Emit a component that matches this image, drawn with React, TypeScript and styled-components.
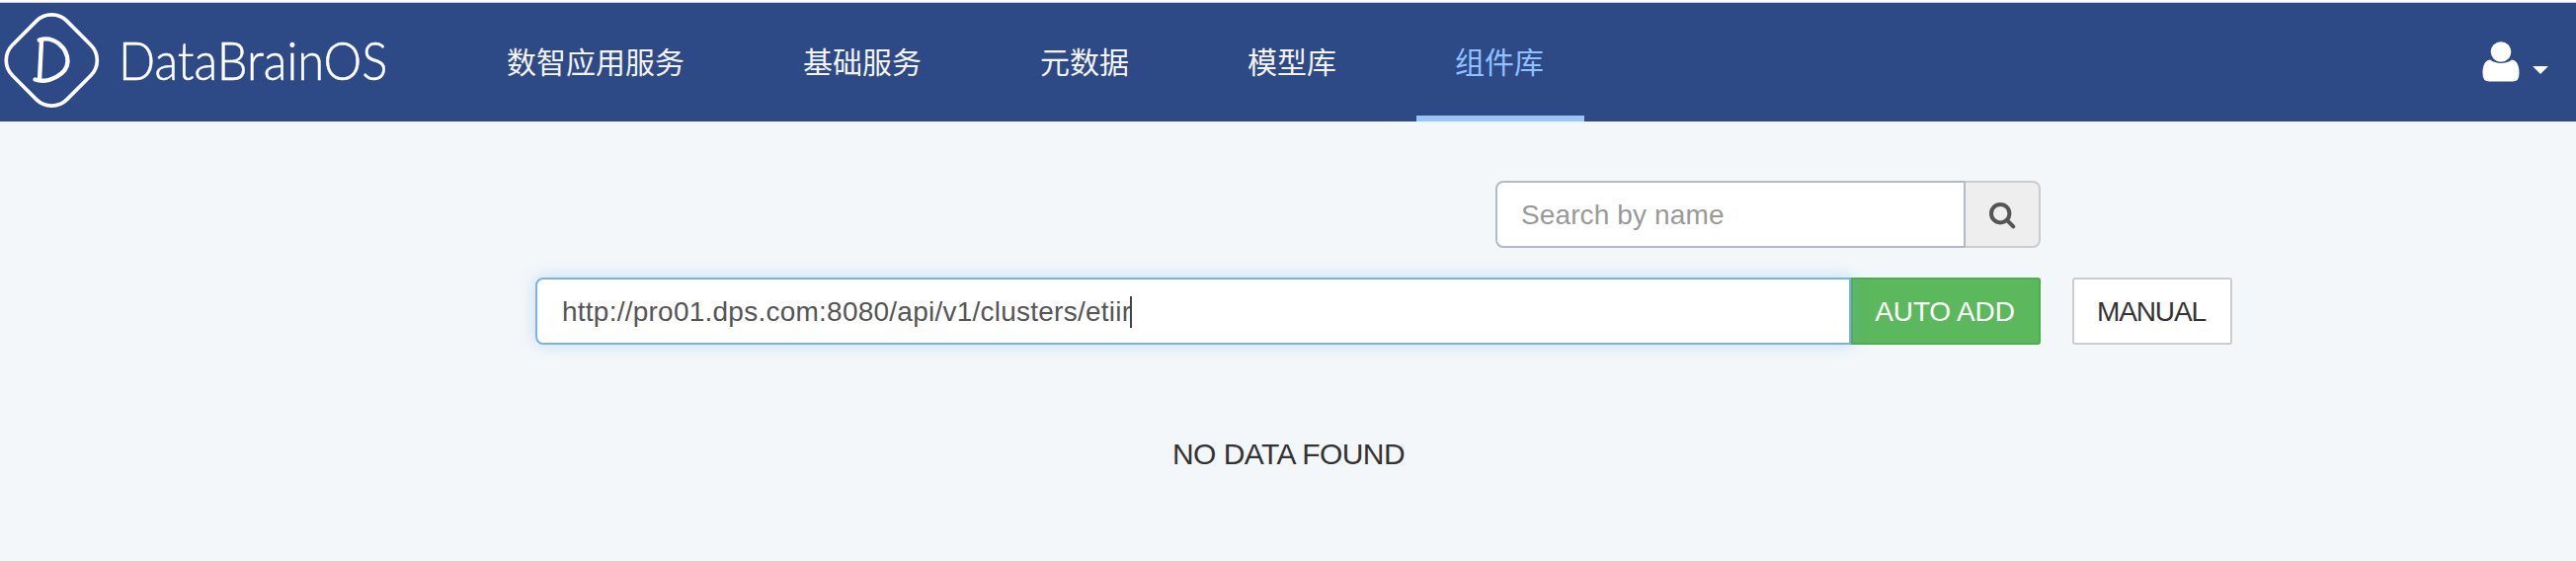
import React from "react";
import styled, { createGlobalStyle } from "styled-components";

const GlobalStyle = createGlobalStyle`
  * { box-sizing: border-box; }
  body {
    margin: 0;
    background: #f3f7fa;
    font-family: "Liberation Sans", "Noto Sans CJK SC", sans-serif;
    font-size: 28px;
    line-height: 40px;
    color: #333;
  }
`;

const Page = styled.div`
  width: 2608px;
  height: 568px;
  border-top: 2px solid #fff;
`;

const Header = styled.header`
  display: flex;
  height: 121px;
  border-top: 1px solid #c9cccf;
  background: #2d4a86;
`;

const Brand = styled.a`
  display: flex;
  width: 474px;
  height: 120px;
`;

const Wordmark = styled.span`
  width: 300px;
  margin-left: 8px;
  font: 300 54px/115px Lato, sans-serif;
  color: #fff;
  white-space: nowrap;
  -webkit-text-stroke: 0.5px #fff;
  transform: scaleX(0.905);
  transform-origin: 0 50%;
`;

const Nav = styled.nav`
  display: flex;
  gap: 40px;
`;

const NavItem = styled.a<{ $active?: boolean }>`
  height: 120px;
  padding: 0 41px 0 39px;
  box-shadow: inset 0 -6px ${(p) => (p.$active ? "#98c5ff" : "transparent")};
  color: ${(p) => (p.$active ? "#8fc0ff" : "#f3f3f3")};
  font-size: 30px;
  line-height: 121px;
  white-space: nowrap;
`;

const UserMenu = styled.div`
  margin-left: auto;
  padding: 39px 28px 0 0;
  display: flex;
  gap: 13px;
`;

const Caret = styled.span`
  margin-top: 25px;
  width: 0;
  height: 0;
  border: 8px solid transparent;
  border-top-color: #fff;
`;

const Main = styled.main`
  padding: 60px 348px 0 542px;
`;

const SearchRow = styled.div`
  display: flex;
  width: 552px;
  margin-left: 972px;
`;

const Field = styled.div<{ $focused?: boolean }>`
  flex: 1;
  display: flex;
  align-items: center;
  height: 68px;
  padding: 2px 24px 0 ${(p) => (p.$focused ? 25 : 24)}px;
  background: #fff;
  border: 2px solid ${(p) => (p.$focused ? "#78b3e4" : "#b2b9c8")};
  border-radius: 8px 0 0 8px;
  color: ${(p) => (p.$focused ? "#555" : "#999")};
  letter-spacing: ${(p) => (p.$focused ? 0.24 : 0.12)}px;
  ${(p) => p.$focused && "position: relative; box-shadow: 0 0 16px rgba(102, 175, 233, 0.35);"}
`;

const TextCursor = styled.span`
  width: 2px;
  height: 32px;
  margin-left: -1px;
  background: #444;
`;

const SearchAddon = styled.button`
  display: flex;
  align-items: center;
  justify-content: center;
  width: 76px;
  height: 68px;
  padding: 2px 0 0;
  border: 2px solid #ccc;
  border-left: 0;
  border-radius: 0 8px 8px 0;
  background: #eee;
`;

const AddRow = styled.div`
  display: flex;
  margin-top: 30px;
`;

const Button = styled.button<{ $primary?: boolean }>`
  height: 68px;
  width: ${(p) => (p.$primary ? 192 : 162)}px;
  margin-left: ${(p) => (p.$primary ? 0 : 32)}px;
  padding: 2px 2px 0 0;
  border: 2px solid ${(p) => (p.$primary ? "#4cae4c" : "#ccc")};
  border-radius: ${(p) => (p.$primary ? "0 3px 3px 0" : "3px")};
  background: ${(p) => (p.$primary ? "#5cb85c" : "#fff")};
  color: ${(p) => (p.$primary ? "#fff" : "#333")};
  font: 28px/40px "Liberation Sans", sans-serif;
  letter-spacing: ${(p) => (p.$primary ? -0.15 : -1.1)}px;
`;

const Empty = styled.p`
  margin: 91px 0 0 645px;
  font-size: 30px;
  letter-spacing: -0.55px;
`;

const LogoMark = () => (
  <svg width="112" height="120" viewBox="0 3 112 120" fill="none" stroke="#fff">
    <rect x="13.300" y="22" width="78" height="78" rx="22" transform="rotate(45 52.300 61)" strokeWidth="3.700" />
    <path
      d="M42 41L40 81M39.700 40.500C55 35.500 68.500 49 68.500 62C68.500 75 49 85 35.500 80.500"
      strokeWidth="4.400"
      strokeLinecap="round"
      strokeLinejoin="round"
    />
  </svg>
);

const UserIcon = () => (
  <svg width="38" height="41" viewBox="0 0 38 41" fill="#fff">
    <path d="M8 18.500C1.500 19 .5 27 .5 32.500Q.5 40.500 7 40.500H31Q37.500 40.500 37.500 32.500C37.500 27 36.500 19 30 18.500C24 23 14 23 8 18.500Z" />
    <circle cx="19" cy="10.500" r="10.300" stroke="#2d4a86" strokeWidth="1" paintOrder="stroke" />
  </svg>
);

const SearchIcon = () => (
  <svg width="27" height="27" viewBox="0 0 27 27" fill="none" stroke="#555" strokeWidth="4">
    <circle cx="11.200" cy="11.200" r="9.200" />
    <path d="M18 18L24.300 24.300" strokeLinecap="round" />
  </svg>
);

const navItems = ["数智应用服务", "基础服务", "元数据", "模型库", "组件库"];

export default function App() {
  return (
    <Page>
      <GlobalStyle />
      <Header>
        <Brand>
          <LogoMark />
          <Wordmark>DataBrainOS</Wordmark>
        </Brand>
        <Nav>
          {navItems.map((item) => (
            <NavItem key={item} $active={item === "组件库"}>
              {item}
            </NavItem>
          ))}
        </Nav>
        <UserMenu>
          <UserIcon />
          <Caret />
        </UserMenu>
      </Header>
      <Main>
        <SearchRow>
          <Field>Search by name</Field>
          <SearchAddon>
            <SearchIcon />
          </SearchAddon>
        </SearchRow>
        <AddRow>
          <Field $focused>
            http://pro01.dps.com:8080/api/v1/clusters/etiir
            <TextCursor />
          </Field>
          <Button $primary>AUTO ADD</Button>
          <Button>MANUAL</Button>
        </AddRow>
        <Empty>NO DATA FOUND</Empty>
      </Main>
    </Page>
  );
}
